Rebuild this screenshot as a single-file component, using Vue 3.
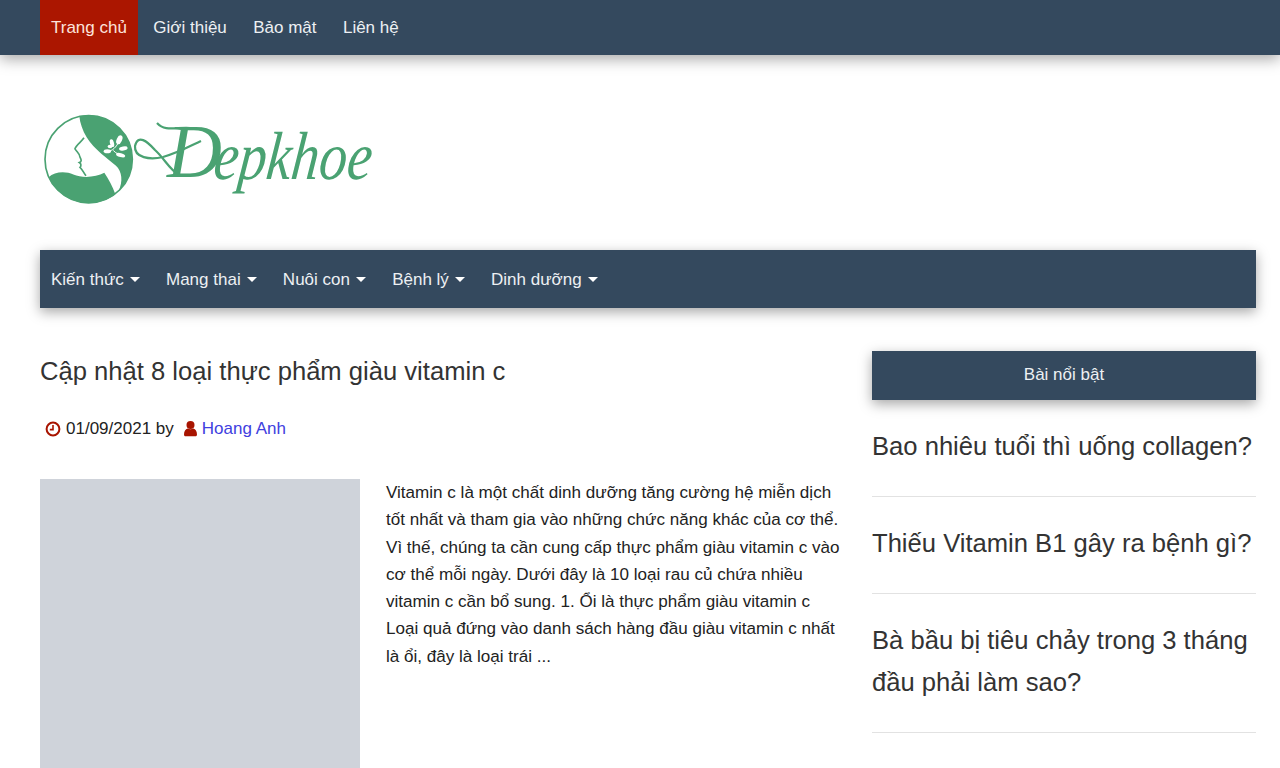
<script setup>
const topLinks = ['Trang chủ', 'Giới thiệu', 'Bảo mật', 'Liên hệ'];
const categories = ['Kiến thức', 'Mang thai', 'Nuôi con', 'Bệnh lý', 'Dinh dưỡng'];
const featured = [
  'Bao nhiêu tuổi thì uống collagen?',
  'Thiếu Vitamin B1 gây ra bệnh gì?',
  'Bà bầu bị tiêu chảy trong 3 tháng đầu phải làm sao?',
  'Vitamin D uống khi nào?'
];
</script>

<template>
  <div class="page">
    <nav class="topbar">
      <a v-for="(link, i) in topLinks" :key="link" class="top-link" :class="{ active: i === 0 }" href="#">{{ link }}</a>
    </nav>

    <div class="wrap">
      <header class="logo-row">
        <svg class="logo" width="340" height="100" viewBox="40 108 340 100" aria-label="Depkhoe">
          <g transform="translate(36 106.500) scale(.3333)">
            <circle cx="158" cy="158" r="131" fill="#fff" stroke="#4aa272" stroke-width="5" />
            <path fill="#4aa272" d="M130 29A132 132 0 0 1 247 255C262 225 258 195 240 178C215 155 175 130 152 92C140 72 132 50 130 29Z" />
            <path fill="#4aa272" d="M38 212C55 195 90 194 112 204C140 216 180 212 205 199C218 218 230 240 238 263A132 132 0 0 1 38 212Z" />
            <path fill="none" stroke="#4aa272" stroke-width="5" d="M144 94C136 106 120 116 117 127C122 136 132 142 132 152C136 160 138 165 130 168C136 172 136 178 132 183C140 190 142 198 150 208" />
            <g fill="#fff">
              <ellipse cx="250" cy="100" rx="8" ry="14" transform="rotate(25 250 100)" />
              <ellipse cx="228" cy="110" rx="6" ry="12" transform="rotate(-15 228 110)" />
              <ellipse cx="262" cy="126" rx="13" ry="6" transform="rotate(-10 262 126)" />
              <ellipse cx="214" cy="134" rx="11" ry="6" />
              <ellipse cx="222" cy="120" rx="7" ry="5" />
              <ellipse cx="254" cy="146" rx="14" ry="6" transform="rotate(15 254 146)" />
            </g>
            <path fill="none" stroke="#fff" stroke-width="3" d="M215 134C230 134 240 122 250 104M232 132C240 140 246 144 262 146" />
          </g>
          <path fill="none" stroke="#4aa272" stroke-width="2.200" d="M157 123C165 132 176 127 190 128M178 174C170 170 164 158 155 150C147 141 138 134 135 146C134 158 150 160 163 157C178 153 190 146 201 141" />
          <text class="logo-text big" x="167" y="177">D</text>
          <text class="logo-text" x="213" y="179" textLength="158" lengthAdjust="spacingAndGlyphs" transform="skewX(-6) translate(18 0)">epkhoe</text>
        </svg>
      </header>

      <nav class="catbar">
        <a v-for="cat in categories" :key="cat" class="cat-link" href="#">{{ cat }}<span class="caret"></span></a>
      </nav>

      <div class="columns">
        <main class="article">
          <h1>Cập nhật 8 loại thực phẩm giàu vitamin c</h1>
          <div class="meta">
            <svg class="ico" width="16" height="16" viewBox="0 0 16 16">
              <circle cx="8" cy="8" r="6.400" fill="none" stroke="#a81400" stroke-width="2" />
              <path d="M8 4v4.600H4.800" fill="none" stroke="#a81400" stroke-width="1.600" />
            </svg>
            <span class="date">01/09/2021 by</span>
            <svg class="ico user" width="13" height="16" viewBox="0 0 13 16">
              <circle cx="6.500" cy="4" r="4" fill="#a81400" />
              <path d="M0 13.400C0 10 1.500 8.200 3.600 7.400c1.800 1.100 4 1.100 5.800 0C11.500 8.200 13 10 13 13.400c0 1.200-.8 1.900-1.800 1.900H1.800C.8 15.300 0 14.600 0 13.400Z" fill="#a81400" />
            </svg>
            <a class="author" href="#">Hoang Anh</a>
          </div>
          <div class="post">
            <div class="thumb"></div>
            <p>Vitamin c là một chất dinh dưỡng tăng cường hệ miễn dịch tốt nhất và tham gia vào những chức năng khác của cơ thể. Vì thế, chúng ta cần cung cấp thực phẩm giàu vitamin c vào cơ thể mỗi ngày. Dưới đây là 10 loại rau củ chứa nhiều vitamin c cần bổ sung. 1. Ổi là thực phẩm giàu vitamin c Loại quả đứng vào danh sách hàng đầu giàu vitamin c nhất là ổi, đây là loại trái ...</p>
          </div>
        </main>

        <aside class="sidebar">
          <div class="side-head">Bài nổi bật</div>
          <a v-for="title in featured" :key="title" class="side-item" href="#">{{ title }}</a>
        </aside>
      </div>
    </div>
  </div>
</template>

<style scoped>
.page {
  font-family: "Liberation Sans", Arial, sans-serif;
  font-size: 17px;
  color: #222;
}

a {
  text-decoration: none;
}

.topbar {
  height: 55px;
  padding: 0 40px;
  display: flex;
  gap: 4.4px;
  background: #34495e;
  box-shadow: 0 4px 14px rgba(0, 0, 0, 0.35);
}

.top-link {
  padding: 0 11px;
  line-height: 55px;
  color: #edf0f3;
}

.top-link.active {
  background: #ab1600;
  color: #fde3dc;
}

.wrap {
  padding: 0 24px 0 40px;
}

.logo-row {
  padding: 53px 0 42px;
}

.logo {
  display: block;
}

.logo-text {
  font-family: "Liberation Serif", serif;
  font-style: italic;
  font-size: 68px;
  fill: #4aa272;
}

.logo-text.big {
  font-size: 76px;
}

.catbar {
  height: 58px;
  display: flex;
  align-items: center;
  gap: 4.4px;
  background: #34495e;
  box-shadow: 0 4px 12px rgba(0, 0, 0, 0.35);
}

.cat-link {
  padding: 1px 10.800px 0 11px;
  display: flex;
  align-items: center;
  color: #edf0f3;
}

.caret {
  width: 0;
  height: 0;
  margin-left: 6px;
  border-top: 5px solid #fff;
  border-left: 5px solid transparent;
  border-right: 5px solid transparent;
}

.columns {
  margin-top: 43px;
  display: grid;
  grid-template-columns: 800px 384px;
  gap: 32px;
}

h1 {
  margin: 0;
  font-size: 25.6px;
  font-weight: 400;
  line-height: 40px;
  color: #333;
}

.meta {
  margin-top: 29px;
  padding-left: 5px;
  height: 18px;
  display: flex;
  align-items: center;
}

.ico {
  flex: none;
}

.date {
  margin-left: 5px;
}

.user {
  margin-left: 10px;
}

.author {
  margin-left: 5px;
  color: #4040e0;
}

.post {
  margin-top: 41px;
  display: flex;
  gap: 26px;
}

.thumb {
  flex: none;
  width: 320px;
  height: 320px;
  background: #cfd3da;
}

.post p {
  margin: 0;
  font-size: 17.07px;
  line-height: 27.3px;
  color: #222;
}

.side-head {
  height: 49px;
  line-height: 48px;
  text-align: center;
  background: #34495e;
  color: #edf0f3;
  box-shadow: 0 4px 12px rgba(0, 0, 0, 0.35);
}

.side-item {
  display: block;
  padding: 25px 0 29px;
  font-size: 25.6px;
  line-height: 42px;
  color: #333;
  border-bottom: 1px solid #e2e2e2;
}
</style>

<style>
html, body {
  overflow: hidden;
}
</style>
